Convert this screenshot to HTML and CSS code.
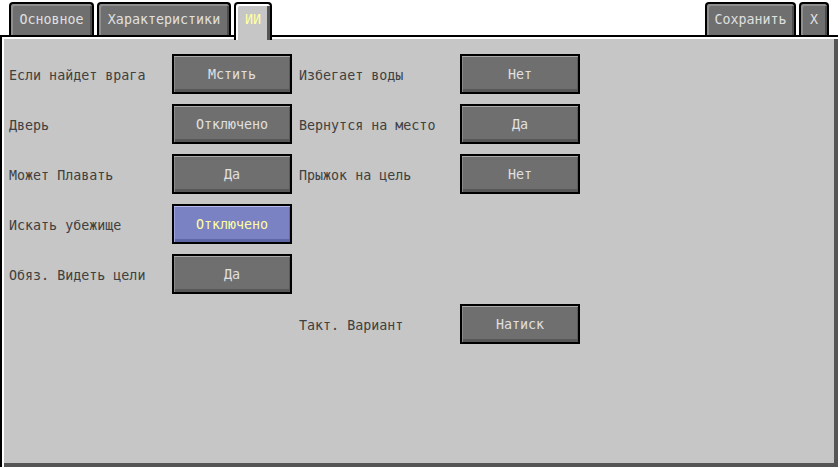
FILE: index.html
```html
<!DOCTYPE html>
<html lang="ru">
<head>
<meta charset="utf-8">
<link rel="stylesheet" href="styles.css">
</head>
<body>
<div class="tabs">
  <div class="tab w-main">Основное</div>
  <div class="tab w-stats">Характеристики</div>
  <div class="tab tab-active w-ai">ИИ</div>
  <div class="tab w-save push">Сохранить</div>
  <div class="tab w-x">X</div>
</div>
<div class="panel">
  <div class="grid">
    <div class="label">Если найдет врага</div>
    <div class="btn">Мстить</div>
    <div class="label label2">Избегает воды</div>
    <div class="btn">Нет</div>

    <div class="label">Дверь</div>
    <div class="btn">Отключено</div>
    <div class="label label2">Вернутся на место</div>
    <div class="btn">Да</div>

    <div class="label">Может Плавать</div>
    <div class="btn">Да</div>
    <div class="label label2">Прыжок на цель</div>
    <div class="btn">Нет</div>

    <div class="label">Искать убежище</div>
    <div class="btn btn-selected">Отключено</div>
    <div></div>
    <div></div>

    <div class="label">Обяз. Видеть цели</div>
    <div class="btn">Да</div>
    <div></div>
    <div></div>

    <div></div>
    <div></div>
    <div class="label label2">Такт. Вариант</div>
    <div class="btn">Натиск</div>
  </div>
</div>
</body>
</html>
```
FILE: styles.css
```css
html, body {
  margin: 0;
  padding: 0;
  background: #ffffff;
}
body {
  width: 840px;
  height: 468px;
  overflow: hidden;
  font-family: "DejaVu Sans Mono", "Liberation Mono", monospace;
  font-size: 13.33px;
  line-height: 16px;
}
.tabs {
  display: flex;
  align-items: flex-start;
  gap: 3px;
  height: 35px;
  padding: 2px 11px 0 9px;
  box-sizing: border-box;
  position: relative;
  z-index: 2;
}
.tab {
  box-sizing: border-box;
  height: 33px;
  border: 2px solid #000;
  border-bottom: none;
  border-radius: 4px 4px 0 0;
  background: #6f6f6f;
  box-shadow: inset 2px 2px 0 #8e8e8e, inset -2px 0 0 #4c4c4c;
  color: #e0e0e0;
  text-align: center;
  padding-top: 8px;
  white-space: nowrap;
}
.tab-active {
  height: 38px;
  margin-bottom: -5px;
  background: #c6c6c6;
  box-shadow: inset 2px 2px 0 #ffffff, inset -3px 0 0 #555555;
  color: #ffffa0;
}
.push { margin-left: auto; }
.w-main { width: 85px; }
.w-stats { width: 134px; }
.w-ai { width: 38px; }
.w-save { width: 91px; }
.w-x { width: 30px; }

.panel {
  box-sizing: border-box;
  width: 838px;
  height: 432px;
  background: #c6c6c6;
  border-top: 2px solid #000;
  border-left: 2px solid #000;
  box-shadow: inset 2px 2px 0 #ffffff, inset -4px -4px 0 #555555;
  padding: 17px 0 0 7px;
  position: relative;
  z-index: 1;
}
.grid {
  display: grid;
  grid-template-columns: 163px 120px 168px 120px;
  grid-auto-rows: 40px;
  row-gap: 10px;
}
.label {
  color: #404040;
  padding-top: 14px;
  white-space: nowrap;
}
.label2 {
  padding-left: 7px;
}
.btn {
  box-sizing: border-box;
  height: 40px;
  border: 2px solid #000;
  background: #6f6f6f;
  box-shadow: inset 0 1px 0 #a9a9a9, inset 1px 0 0 #8a8a8a, inset 0 -3px 0 #575757, inset -1px 0 0 #5a5a5a;
  color: #e0e0e0;
  text-align: center;
  padding-top: 11px;
  white-space: nowrap;
}
.btn-selected {
  background: #7b82c4;
  box-shadow: inset 0 1px 0 #b6bbf0, inset 1px 0 0 #9ea4e2, inset 0 -3px 0 #5f66a6, inset -1px 0 0 #636aa8;
  color: #ffffa0;
}
```
